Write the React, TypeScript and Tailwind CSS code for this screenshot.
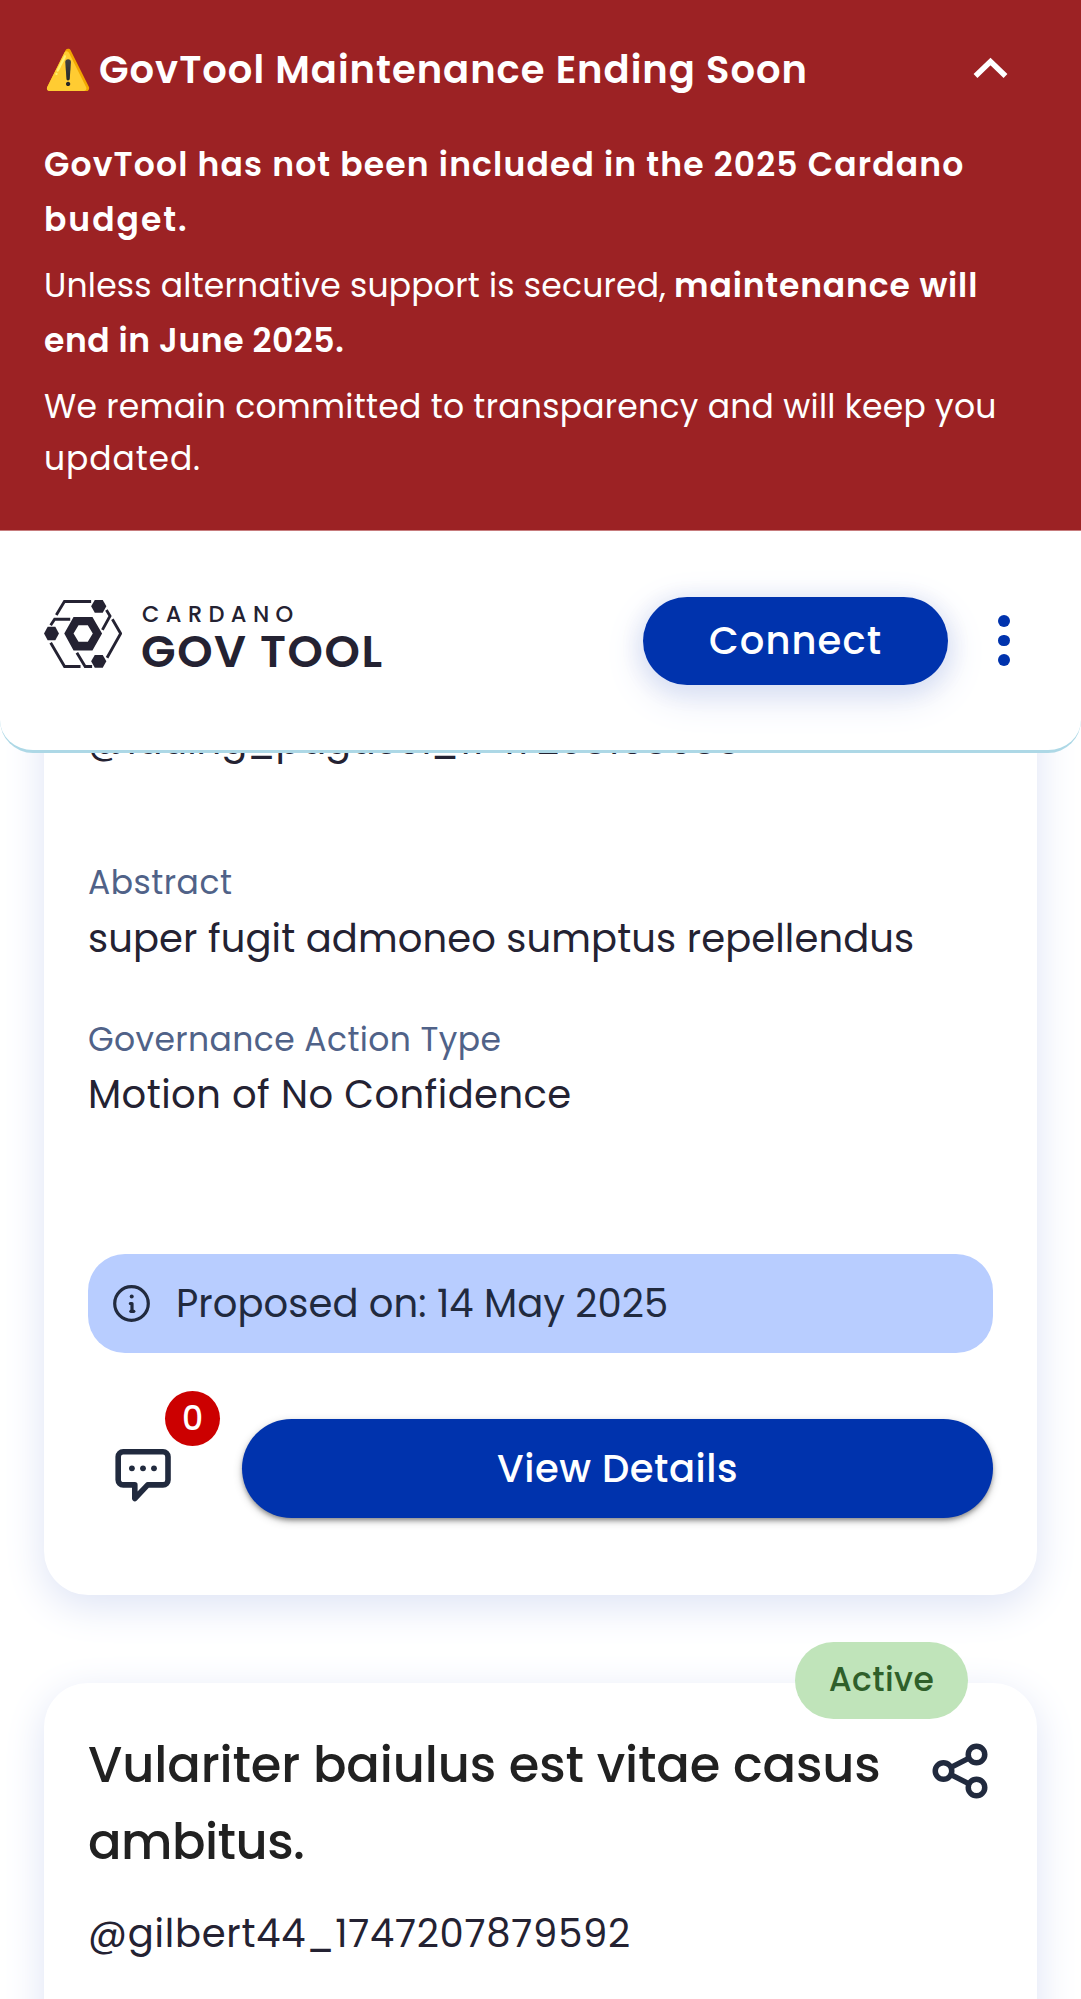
function CardanoMark() {
  return (
    <svg className="-mt-[14px] h-[68px] w-[78px] shrink-0" viewBox="42 60 235 205" fill="#242232">
      <g fill="none" stroke="#242232" strokeWidth="8.500">
        <path d="M184 64.500H103.500L79 105" />
        <path d="M62 136L74 118H121" />
        <path d="M230 90L241 108L218 150" />
        <path d="M248 118L273 161L232 234" />
        <path d="M62 189L104 260.500H152" />
        <path d="M141 219L166 260.500H187" />
      </g>
      <path fillRule="evenodd" d="M103 161L131 111H188L217 161L188 212H131ZM131 161L146 186H174L189 161L174 136H146Z" />
      <path d="M42 161L53 141H76L87 161L76 181H53Z" />
      <path d="M184 79L195 60H219L230 79L219 98.500H195Z" />
      <path d="M184 245L195 226H219L230 245L219 264.500H195Z" />
    </svg>
  );
}

function Banner() {
  return (
    <section className="h-[531px] border-b border-[#c77c7d] bg-[#9c2224] pt-8 pl-11 text-white">
      <div className="flex h-[75px] items-center">
        <span className="w-[55px] text-[38.500px] leading-[75px]">⚠️</span>
        <h2 className="w-[871px] text-[38.500px] leading-[75px] font-semibold tracking-[0.980px]">
          GovTool Maintenance Ending Soon
        </h2>
        <svg className="-mt-[3px] h-6 w-10" viewBox="0 0 40 24" fill="none" stroke="white" strokeWidth="5.500">
          <path d="M5.500 20L20.500 5.500L35.500 20" />
        </svg>
      </div>
      <div className="mt-[30px] text-[33px] leading-[55px] font-semibold">
        <p className="tracking-[1.150px]">GovTool has not been included in the 2025 Cardano</p>
        <p className="tracking-[2px]">budget.</p>
      </div>
      <div className="mt-[11px] text-[33px] leading-[55px]">
        <p className="flex">
          <span className="w-[630px] tracking-[0.220px]">Unless alternative support is secured,</span>
          <strong className="font-semibold tracking-[0.850px]">maintenance will</strong>
        </p>
        <p className="font-semibold tracking-[0.550px]">end in June 2025.</p>
      </div>
      <div className="mt-[13px] text-[33px] leading-[52px]">
        <p className="tracking-[0.260px]">We remain committed to transparency and will keep you</p>
        <p className="tracking-[0.900px]">updated.</p>
      </div>
    </section>
  );
}

function Header() {
  return (
    <header className="flex h-[222px] items-center rounded-b-[33px] border-b-[3px] border-[#add8e6] bg-white pl-11">
      <CardanoMark />
      <div className="mt-[-4px] ml-[19px] w-[502px] text-[#242232]">
        <p className="pl-px text-[22.500px] leading-[26px] font-medium tracking-[6.400px]">CARDANO</p>
        <p className="mt-[1px] text-[45px] leading-[48px] font-semibold tracking-[1.600px]">GOV TOOL</p>
      </div>
      <button className="h-[88px] w-[305px] rounded-full bg-[#0033ad] text-center text-[38.500px] font-medium tracking-[1.100px] text-white shadow-[0_11px_41px_0_#dde3f5,0_5px_22px_0_#0033ad30]">
        Connect
      </button>
      <div className="ml-[50px] flex flex-col gap-2">
        <i className="size-[11.500px] rounded-full bg-[#0033ad]" />
        <i className="size-[11.500px] rounded-full bg-[#0033ad]" />
        <i className="size-[11.500px] rounded-full bg-[#0033ad]" />
      </div>
    </header>
  );
}

function CommentIcon() {
  return (
    <svg className="h-[53px] w-[56px]" viewBox="0 0 56 53" fill="none" stroke="#212a3e" strokeWidth="5.600" strokeLinejoin="round">
      <path d="M8.200 2.800H48A5 5 0 0 1 53 7.800V30.900A5 5 0 0 1 48 35.900H32.700L19.800 49.500V35.900H8.200A5 5 0 0 1 3.200 30.900V7.800A5 5 0 0 1 8.200 2.800Z" />
      <g fill="#212a3e" stroke="none">
        <circle cx="16.900" cy="19.300" r="2.900" />
        <circle cx="28" cy="19.300" r="2.900" />
        <circle cx="39" cy="19.300" r="2.900" />
      </g>
    </svg>
  );
}

function InfoIcon() {
  return (
    <svg className="size-[37px]" viewBox="0 0 37 37" fill="none" stroke="#212a3e" strokeWidth="3.200">
      <circle cx="18.500" cy="18.500" r="16.800" />
      <path d="M17.300 18.500H19V26.300" strokeLinecap="round" strokeLinejoin="round" />
      <path d="M17.800 26.300H20.800" strokeLinecap="round" />
      <circle cx="18.700" cy="11.500" r="2" fill="#212a3e" stroke="none" />
    </svg>
  );
}

function ShareIcon() {
  return (
    <svg className="absolute top-[55px] left-[883px] size-[66px]" viewBox="0 0 24 24" fill="none" stroke="#212a3e" strokeWidth="2">
      <circle cx="18" cy="6" r="3" />
      <circle cx="6" cy="12" r="3" />
      <circle cx="18" cy="18" r="3" />
      <path d="M8.700 10.700L15.300 7.300M8.700 13.300L15.300 16.700" />
    </svg>
  );
}

export default function App() {
  return (
    <div className="h-[1999px] w-[1081px] overflow-hidden bg-white font-[Poppins,Inter,sans-serif] whitespace-nowrap">
      <div className="relative z-10">
        <Banner />
        <Header />
      </div>
      <main className="-mt-[52px] px-11 text-[#242232]">
        <article className="h-[894px] rounded-b-[44px] bg-white px-11 pt-[10px] shadow-[0_11px_41px_0_#dde3f5]">
          <p className="text-[38.500px] leading-[60px]">
            @lauing_<span className="tracking-[-1.300px]">pagac61</span>
            <span className="tracking-[-0.100px]">_1747208168688</span>
          </p>
          <h3 className="mt-[87px] text-[33px] leading-[50px] tracking-[0.500px] text-[#506288]">Abstract</h3>
          <p className="mt-[1px] text-[38.500px] leading-[60px] tracking-[0.110px]">super fugit admoneo sumptus repellendus</p>
          <h3 className="mt-[46px] text-[33px] leading-[50px] tracking-[0.400px] text-[#506288]">Governance Action Type</h3>
          <p className="text-[38.500px] leading-[60px] tracking-[0.450px]">Motion of No Confidence</p>
          <div className="mt-[129px] flex h-[99px] items-center gap-[26px] rounded-[37px] bg-[#b8cdff] pl-[25px] text-[38.500px] tracking-[0.070px] text-[#212a3e]">
            <InfoIcon />
            <span>Proposed on: 14 May 2025</span>
          </div>
          <div className="mt-[66px] flex h-[99px]">
            <div className="relative w-[154px] pt-[30px] pl-[27px]">
              <CommentIcon />
              <span className="absolute -top-7 left-[77px] flex h-[55px] w-[55px] items-center justify-center rounded-full bg-[#cc0000] text-[33px] font-medium text-white">
                0
              </span>
            </div>
            <button className="flex-1 rounded-full bg-[#0033ad] text-[38.500px] font-medium tracking-[0.520px] text-white shadow-[0_3px_5px_-1px_#0006,0_3px_10px_0_#0003]">
              View Details
            </button>
          </div>
        </article>
        <article className="relative mt-[88px] h-[400px] rounded-t-[44px] bg-white px-11 pt-[43px] shadow-[0_11px_41px_0_#dde3f5]">
          <span className="absolute -top-[41px] left-[751px] h-[77px] w-[173px] rounded-full bg-[#c0e4ba] text-center text-[33px] leading-[75px] font-medium tracking-[0.400px] text-[#2f5f2a]">
            Active
          </span>
          <ShareIcon />
          <h2 className="text-[49.500px] leading-[77px] font-medium text-[#212121]">
            <span className="block tracking-[-0.110px]">Vulariter baiulus est vitae casus</span>
            <span className="block tracking-[-0.500px]">ambitus.</span>
          </h2>
          <p className="mt-[24px] text-[38.500px] leading-[60px] tracking-[0.750px]">@gilbert44_1747207879592</p>
        </article>
      </main>
    </div>
  );
}
